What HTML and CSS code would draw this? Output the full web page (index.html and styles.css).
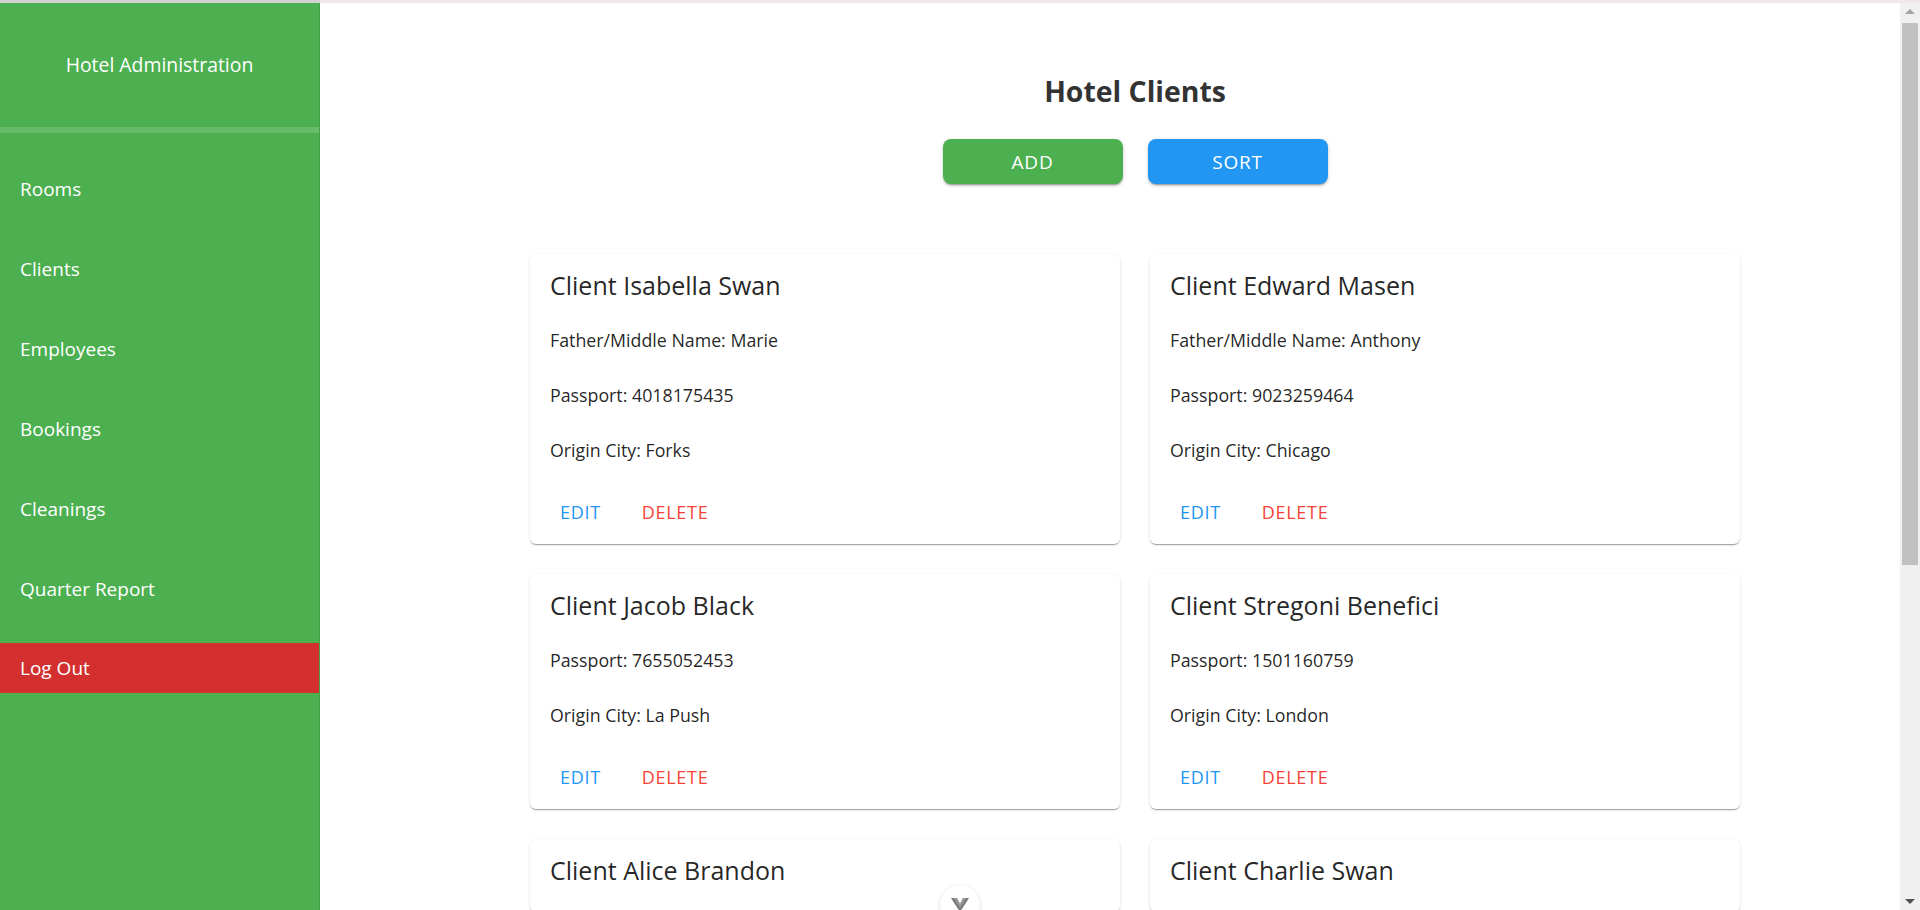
FILE: index.html
```html
<!DOCTYPE html>
<html lang="en">
<head>
<meta charset="utf-8">
<title>Hotel Clients</title>
<link rel="stylesheet" href="styles.css">
</head>
<body>
<div class="topline"></div>
<div class="app">
  <aside class="sidebar">
    <div class="brand">Hotel Administration</div>
    <div class="divider"></div>
    <nav class="nav">
      <a class="nav-item">Rooms</a>
      <a class="nav-item">Clients</a>
      <a class="nav-item">Employees</a>
      <a class="nav-item">Bookings</a>
      <a class="nav-item">Cleanings</a>
      <a class="nav-item">Quarter Report</a>
      <a class="nav-item logout">Log Out</a>
    </nav>
  </aside>
  <main class="main">
    <h1 class="page-title">Hotel Clients</h1>
    <div class="toolbar">
      <button class="btn btn-green">ADD</button>
      <button class="btn btn-blue">SORT</button>
    </div>
    <section class="grid">
      <article class="card">
        <h2 class="card-title">Client Isabella Swan</h2>
        <p class="line">Father/Middle Name: Marie</p>
        <p class="line">Passport: 4018175435</p>
        <p class="line">Origin City: Forks</p>
        <div class="actions"><button class="tbtn edit">EDIT</button><button class="tbtn del">DELETE</button></div>
      </article>
      <article class="card">
        <h2 class="card-title">Client Edward Masen</h2>
        <p class="line">Father/Middle Name: Anthony</p>
        <p class="line">Passport: 9023259464</p>
        <p class="line">Origin City: Chicago</p>
        <div class="actions"><button class="tbtn edit">EDIT</button><button class="tbtn del">DELETE</button></div>
      </article>
      <article class="card">
        <h2 class="card-title">Client Jacob Black</h2>
        <p class="line">Passport: 7655052453</p>
        <p class="line">Origin City: La Push</p>
        <div class="actions"><button class="tbtn edit">EDIT</button><button class="tbtn del">DELETE</button></div>
      </article>
      <article class="card">
        <h2 class="card-title">Client Stregoni Benefici</h2>
        <p class="line">Passport: 1501160759</p>
        <p class="line">Origin City: London</p>
        <div class="actions"><button class="tbtn edit">EDIT</button><button class="tbtn del">DELETE</button></div>
      </article>
      <article class="card">
        <h2 class="card-title">Client Alice Brandon</h2>
      </article>
      <article class="card">
        <h2 class="card-title">Client Charlie Swan</h2>
      </article>
    </section>
  </main>
  <div class="scrollbar" aria-hidden="true">
    <div class="sb-arrow sb-up"></div>
    <div class="sb-track"><div class="sb-thumb"></div></div>
    <div class="sb-arrow sb-down"></div>
  </div>
</div>
<button class="scroll-down" aria-label="Scroll down">
  <svg width="18" height="14" viewBox="0 0 18 14"><path d="M0 0 H6 L9 6 L12 0 H18 L9 14 Z" fill="#7a7a7a"/><path d="M3 0 H6 L9 6 L12 0 H15 L9 10 Z" fill="#9a9a9a"/></svg>
</button>
</body>
</html>
```

FILE: styles.css
```css
* { box-sizing: border-box; }

html, body {
  margin: 0;
  padding: 0;
  height: 100%;
  overflow: hidden;
}

body {
  font-family: "Open Sans", "Noto Sans", sans-serif;
  color: rgba(0, 0, 0, 0.87);
  background: #fff;
}

.topline {
  height: 3px;
  background: linear-gradient(to right, #d2d2d2 0, #d2d2d2 320px, #f1e8e9 320px);
}

.app {
  display: flex;
  height: calc(100% - 3px);
}

.sidebar {
  width: 320px;
  flex: 0 0 320px;
  background: #4caf50;
  color: #fff;
  border-right: 1px solid #43a047;
  display: flex;
  flex-direction: column;
}

.brand {
  height: 124px;
  display: flex;
  align-items: center;
  justify-content: center;
  font-size: 19.4px;
  padding-bottom: 2px;
}

.divider {
  height: 6px;
  background: #67bb6a;
}

.nav {
  display: flex;
  flex-direction: column;
  gap: 30px;
  padding-top: 31px;
}

.nav-item {
  height: 50px;
  display: flex;
  align-items: center;
  padding-left: 20px;
  font-size: 19px;
  color: #fff;
  cursor: pointer;
}

.nav-item.logout {
  background: #d32f2f;
  margin-top: -1px;
}

.main {
  flex: 1;
  overflow: hidden;
  padding: 70px 0 70px 50px;
}

/* classic scrollbar column */
.scrollbar {
  width: 20px;
  flex: 0 0 20px;
  background: #f0f0f0;
  display: flex;
  flex-direction: column;
}
.sb-arrow {
  height: 17px;
  display: flex;
  align-items: center;
  justify-content: center;
}
.sb-arrow::before {
  content: "";
  width: 0;
  height: 0;
  border-left: 5px solid transparent;
  border-right: 5px solid transparent;
}
.sb-up::before { border-bottom: 5px solid #a3a3a3; }
.sb-down::before { border-top: 5px solid #505050; }
.sb-track {
  flex: 1;
  padding: 3px 2px 0;
}
.sb-thumb {
  height: 542px;
  background: #c1c1c1;
}

.page-title {
  margin: 0;
  text-align: center;
  font-size: 28.4px;
  line-height: 36px;
  font-weight: 700;
  color: #333;
}

.toolbar {
  display: flex;
  justify-content: center;
  gap: 25px;
  margin-top: 30px;
}

.btn {
  width: 180px;
  height: 45px;
  border: none;
  border-radius: 8px;
  color: #fff;
  font-family: inherit;
  font-size: 19px;
  letter-spacing: 0.8px;
  box-shadow: 0 3px 1px -2px rgba(0,0,0,0.2), 0 2px 2px 0 rgba(0,0,0,0.14), 0 1px 5px 0 rgba(0,0,0,0.12);
  cursor: pointer;
}
.btn-green { background: #4caf50; }
.btn-blue { background: #2196f3; }

.grid {
  display: grid;
  grid-template-columns: 590px 590px;
  justify-content: center;
  align-items: start;
  gap: 30px;
  margin-top: 70px;
}

.card {
  background: #fff;
  border-radius: 6px;
  box-shadow: 0 2px 1px -1px rgba(0,0,0,0.2), 0 1px 1px 0 rgba(0,0,0,0.14), 0 1px 3px 0 rgba(0,0,0,0.12);
  padding: 16px 20px 14px;
}

.card-title {
  margin: 0 0 13px;
  font-size: 25px;
  line-height: 30px;
  font-weight: 500;
  color: rgba(0, 0, 0, 0.87);
}

.line {
  margin: 0;
  padding: 16px 0;
  font-size: 17.8px;
  line-height: 23px;
}

.actions {
  display: flex;
  gap: 21px;
  padding-top: 16px;
}

.tbtn {
  height: 36px;
  padding: 0 10px;
  border: none;
  background: transparent;
  font-family: inherit;
  font-size: 18px;
  letter-spacing: 0.7px;
  cursor: pointer;
}
.tbtn.edit { color: #2196f3; }
.tbtn.del { color: #f44336; }

.scroll-down {
  position: fixed;
  left: 940px;
  top: 885px;
  width: 40px;
  height: 40px;
  border-radius: 50%;
  border: none;
  background: #fff;
  box-shadow: 0 1px 4px rgba(0,0,0,0.15);
  display: flex;
  justify-content: center;
  padding-top: 13px;
}
```
